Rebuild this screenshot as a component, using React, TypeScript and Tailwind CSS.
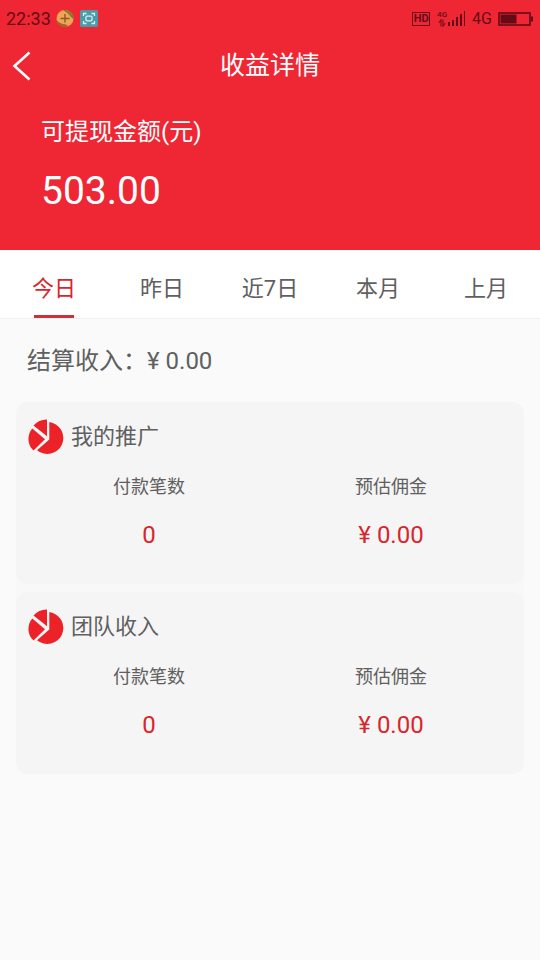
import React, { useState } from "react";

const TABS = ["今日", "昨日", "近7日", "本月", "上月"];

const CARDS = [
  { id: "promo", title: "我的推广", count: 0, commission: 0 },
  { id: "team", title: "团队收入", count: 0, commission: 0 },
];

const money = (n: number) => `¥ ${n.toFixed(2)}`;

function PieIcon() {
  return (
    <svg viewBox="0 0 36 36" className="h-9 w-9 shrink-0 fill-[#ec2228]" aria-hidden="true">
      <path d="M21.3 3.1 A16 16 0 1 1 9 31.2 L21.3 20.5 Z" />
      <path d="M19 0.5 V17.3 L5.5 6.5 A17.3 17.3 0 0 1 19 0.5 Z" />
      <path d="M4.3 9.5 L17 20.2 L5.5 31.6 A16 16 0 0 1 4.3 9.5 Z" />
    </svg>
  );
}

function CoinIcon() {
  return (
    <svg viewBox="0 0 20 20" className="h-5 w-5" aria-hidden="true">
      <circle cx="10" cy="9.5" r="8.5" fill="#f0a555" />
      <path d="M8 1.2 A8.5 8.5 0 0 1 18.5 10.5 L16 8 Q13 3.5 8 1.2 Z" fill="#8a7a2e" />
      <path d="M1.5 11 Q5 15 11 15.5 L13.5 17.3 A8.5 8.5 0 0 1 1.5 11 Z" fill="#a3652c" />
      <path d="M5.5 9.5 H14.5 M10 5 V13.5" stroke="#8a5a28" strokeWidth="1.4" fill="none" />
    </svg>
  );
}

function ScanIcon() {
  return (
    <svg viewBox="0 0 20 20" className="h-5 w-5" aria-hidden="true">
      <rect x="1" y="1" width="18" height="17" rx="1.5" fill="#4c9ba8" />
      <g fill="none" stroke="#d9f1f2" strokeWidth="1.3">
        <path d="M4.5 7 V4.5 H7.5 M12.5 4.5 H15.5 V7 M15.5 12 V14.5 H12.5 M7.5 14.5 H4.5 V12" />
        <rect x="7" y="7.2" width="6" height="4.6" rx="1" />
      </g>
    </svg>
  );
}

function StatusBar() {
  return (
    <div className="flex h-9 items-center justify-between pl-1.5 pr-1.5 pt-0.5 text-[#650b17]">
      <div className="flex items-center gap-1">
        <span className="text-lg leading-5">22:33</span>
        <CoinIcon />
        <ScanIcon />
      </div>
      <div className="flex items-center gap-1.5">
        <span className="flex h-3.5 w-[18px] items-center justify-center border border-current text-[11px] font-bold leading-3">
          HD
        </span>
        <div className="flex items-end">
          <div className="flex w-3 flex-col items-center">
            <span className="text-[8px] font-medium leading-2">4G</span>
            <svg viewBox="0 0 8 8" className="h-2 w-2" aria-hidden="true">
              <path d="M3 7.5 V0.5 L0.8 4 M5 0.5 V7.5 L7.2 4" fill="none" stroke="currentColor" strokeWidth="1" />
            </svg>
          </div>
          <svg viewBox="0 0 18 16" className="h-4 w-[18px] fill-current" aria-hidden="true">
            <rect x="0" y="11" width="2" height="4" />
            <rect x="4" y="9" width="2" height="6" />
            <rect x="8" y="6" width="2" height="9" />
            <rect x="12" y="3" width="2" height="12" />
            <rect x="16" y="0" width="1" height="15" />
          </svg>
        </div>
        <span className="text-base leading-5">4G</span>
        <svg viewBox="0 0 36 14" className="h-3.5 w-9" aria-hidden="true">
          <rect x="1" y="1" width="31" height="12" fill="none" stroke="currentColor" strokeWidth="1.6" />
          <rect x="2.5" y="2.5" width="16" height="9" fill="currentColor" />
          <rect x="33" y="4.5" width="2" height="5" fill="currentColor" />
        </svg>
      </div>
    </div>
  );
}

function Stat({ label, value }: { label: string; value: string | number }) {
  return (
    <div className="flex-1 text-center">
      <dt className="text-lg leading-6 text-[#606060]">{label}</dt>
      <dd className="mt-6 text-2xl leading-6 text-[#d6272d]">{value}</dd>
    </div>
  );
}

export default function App() {
  const [active, setActive] = useState(0);

  return (
    <div className="min-h-screen bg-[#fafafa] font-['Roboto','Noto_Sans_CJK_SC',sans-serif] text-[#606060]">
      <header className="bg-[#ef2734] pb-9 text-white">
        <StatusBar />
        <div className="grid h-[60px] grid-cols-[48px_1fr_48px] items-center">
          <button type="button" aria-label="返回" className="flex h-12 items-center pl-3">
            <svg viewBox="0 0 20 30" className="h-[30px] w-5" aria-hidden="true">
              <path d="M17.5 1.5 L2.5 15 L17.5 28.5" fill="none" stroke="currentColor" strokeWidth="2.6" />
            </svg>
          </button>
          <h1 className="text-center text-[25px] leading-8">收益详情</h1>
        </div>
        <div className="px-[41px] pt-5">
          <div className="text-2xl leading-8">可提现金额(元)</div>
          <div className="mt-5 text-[39px] leading-[46px]">503.00</div>
        </div>
      </header>

      <nav className="flex border-b border-[#efefef] bg-white">
        {TABS.map((t, i) => (
          <button
            key={t}
            type="button"
            onClick={() => setActive(i)}
            className={`flex flex-1 flex-col items-center pt-[23px] text-[22px] leading-8 ${
              i === active ? "text-[#d6272d]" : ""
            }`}
          >
            {t}
            <span className={`mt-2.5 h-[3px] w-10 ${i === active ? "bg-[#d0303c]" : ""}`} />
          </button>
        ))}
      </nav>

      <main className="px-4 pt-[26px]">
        <div className="pl-[11px] text-2xl leading-8">结算收入：{money(0)}</div>

        <div className="mt-[25px] flex flex-col gap-2 rounded-xl bg-[#f8f8f8]">
          {CARDS.map((c) => (
            <section key={c.id} className="rounded-xl bg-[#f5f5f5] px-3 pb-[37px] pt-[17px]">
              <h2 className="flex items-center gap-[7px] text-[22px] leading-9">
                <PieIcon />
                {c.title}
              </h2>
              <dl className="mt-5 flex">
                <Stat label="付款笔数" value={c.count} />
                <Stat label="预估佣金" value={money(c.commission)} />
              </dl>
            </section>
          ))}
        </div>
      </main>
    </div>
  );
}
